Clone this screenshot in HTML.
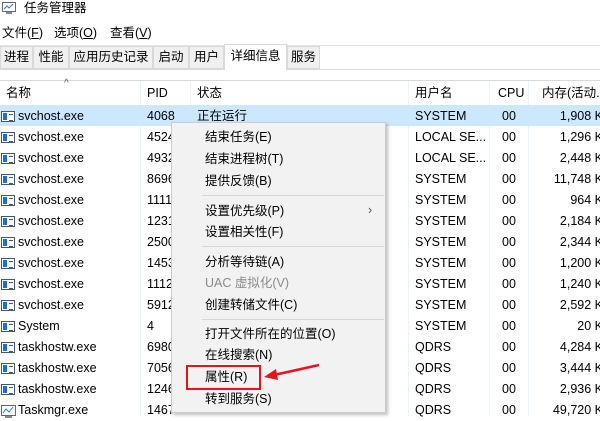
<!DOCTYPE html>
<html><head><meta charset="utf-8"><style>
*{margin:0;padding:0;box-sizing:border-box}
body{width:600px;height:416px;overflow:hidden;background:#fff;font-family:"Liberation Sans","Microsoft YaHei","Noto Sans CJK SC",sans-serif;font-size:12.5px;color:#000;position:relative}
.a{position:absolute;white-space:nowrap;line-height:16px}
.tab{position:absolute;top:46px;height:23px;border:1px solid #d9d9d9;background:#f0f0f0;line-height:21px;text-align:center;white-space:nowrap;font-size:12.5px}
.row{position:absolute;left:0;width:600px;height:21px;line-height:21px;white-space:nowrap}
.row span{position:absolute}
.ic{position:absolute;left:1px;top:5px;width:14px;height:11px;border:1px solid #3c5a7a;background:#fff}
.ic:before{content:"";position:absolute;left:1px;top:1px;width:4px;height:7px;background:#1e6fd0}
.ic:after{content:"";position:absolute;left:7px;top:2px;width:4px;height:5px;border-top:1px solid #555;border-bottom:1px solid #555}
.vl{position:absolute;top:81px;width:1px;height:335px;background:#eaf2fb}
.menu{position:absolute;left:171px;top:122px;width:215px;height:291px;background:#f2f2f2;border:1px solid #ccc;box-shadow:2px 2px 3px rgba(0,0,0,.25)}
.mi{position:absolute;left:33px;font-size:12.5px;line-height:16px;white-space:nowrap}
.sep{position:absolute;left:30px;width:182px;height:1px;background:#d7d7d7}
</style></head><body>
<svg class="a" style="left:2px;top:2px" width="14" height="12"><rect x="0.5" y="0.5" width="13" height="9" fill="#fff" stroke="#667"/><polyline points="2,7 5,4 7,6 11,2" fill="none" stroke="#2a7ad0"/><rect x="4" y="10" width="6" height="2" fill="#889"/></svg>
<div class="a" style="left:24px;top:0px">任务管理器</div>
<div class="a" style="left:2px;top:25px">文件(<u>F</u>)</div>
<div class="a" style="left:54px;top:25px">选项(<u>O</u>)</div>
<div class="a" style="left:110px;top:25px">查看(<u>V</u>)</div>
<div class="a" style="left:0;top:45px;width:600px;height:1px;background:#e3e3e3"></div>
<div class="a" style="left:0;top:69px;width:600px;height:1px;background:#d9d9d9"></div>
<div class="tab" style="left:0;width:33px">进程</div>
<div class="tab" style="left:33px;width:36px">性能</div>
<div class="tab" style="left:69px;width:84px">应用历史记录</div>
<div class="tab" style="left:153px;width:36px">启动</div>
<div class="tab" style="left:189px;width:35px">用户</div>
<div class="tab" style="left:224px;top:44px;height:26px;width:63px;background:#fff;border-bottom:none;line-height:22px">详细信息</div>
<div class="tab" style="left:287px;width:33px">服务</div>
<div class="a" style="left:0;top:80px;width:600px;height:1px;background:#d9d9d9"></div>
<div class="a" style="left:64px;top:76px;font-size:10px;color:#555">^</div>
<div class="a" style="left:6px;top:85px">名称</div>
<div class="a" style="left:147px;top:85px">PID</div>
<div class="a" style="left:197px;top:85px">状态</div>
<div class="a" style="left:415px;top:85px">用户名</div>
<div class="a" style="left:498px;top:85px">CPU</div>
<div class="a" style="left:542px;top:85px">内存(活动..</div>
<div class="vl" style="left:140px"></div><div class="vl" style="left:190px;height:24px"></div><div class="vl" style="left:408px"></div><div class="vl" style="left:489px"></div><div class="vl" style="left:528px"></div>
<div class="a" style="left:0;top:105px;width:600px;height:21px;background:#cce8ff"></div>
<div class="a" style="left:0;top:106px;width:600px">
<div class="row" style="top:0"><i class="ic"></i><span style="left:18px">svchost.exe</span><span style="left:147px">4068</span><span style="left:197px">正在运行</span><span style="left:415px">SYSTEM</span><span style="left:502px">00</span><span style="right:-3px">1,908 K</span></div>
<div class="row" style="top:21px"><i class="ic"></i><span style="left:18px">svchost.exe</span><span style="left:147px">4524</span><span style="left:415px">LOCAL SE...</span><span style="left:502px">00</span><span style="right:-3px">1,296 K</span></div>
<div class="row" style="top:42px"><i class="ic"></i><span style="left:18px">svchost.exe</span><span style="left:147px">4932</span><span style="left:415px">LOCAL SE...</span><span style="left:502px">00</span><span style="right:-3px">2,448 K</span></div>
<div class="row" style="top:63px"><i class="ic"></i><span style="left:18px">svchost.exe</span><span style="left:147px">8696</span><span style="left:415px">SYSTEM</span><span style="left:502px">00</span><span style="right:-3px">11,748 K</span></div>
<div class="row" style="top:84px"><i class="ic"></i><span style="left:18px">svchost.exe</span><span style="left:147px">1111</span><span style="left:415px">SYSTEM</span><span style="left:502px">00</span><span style="right:-3px">964 K</span></div>
<div class="row" style="top:105px"><i class="ic"></i><span style="left:18px">svchost.exe</span><span style="left:147px">1231</span><span style="left:415px">SYSTEM</span><span style="left:502px">00</span><span style="right:-3px">2,184 K</span></div>
<div class="row" style="top:126px"><i class="ic"></i><span style="left:18px">svchost.exe</span><span style="left:147px">2500</span><span style="left:415px">SYSTEM</span><span style="left:502px">00</span><span style="right:-3px">2,344 K</span></div>
<div class="row" style="top:147px"><i class="ic"></i><span style="left:18px">svchost.exe</span><span style="left:147px">1453</span><span style="left:415px">SYSTEM</span><span style="left:502px">00</span><span style="right:-3px">1,200 K</span></div>
<div class="row" style="top:168px"><i class="ic"></i><span style="left:18px">svchost.exe</span><span style="left:147px">1112</span><span style="left:415px">SYSTEM</span><span style="left:502px">00</span><span style="right:-3px">1,240 K</span></div>
<div class="row" style="top:189px"><i class="ic"></i><span style="left:18px">svchost.exe</span><span style="left:147px">5912</span><span style="left:415px">SYSTEM</span><span style="left:502px">00</span><span style="right:-3px">2,592 K</span></div>
<div class="row" style="top:210px"><i class="ic"></i><span style="left:18px">System</span><span style="left:147px">4</span><span style="left:415px">SYSTEM</span><span style="left:502px">00</span><span style="right:-3px">20 K</span></div>
<div class="row" style="top:231px"><i class="ic"></i><span style="left:18px">taskhostw.exe</span><span style="left:147px">6980</span><span style="left:415px">QDRS</span><span style="left:502px">00</span><span style="right:-3px">4,284 K</span></div>
<div class="row" style="top:252px"><i class="ic"></i><span style="left:18px">taskhostw.exe</span><span style="left:147px">7056</span><span style="left:415px">QDRS</span><span style="left:502px">00</span><span style="right:-3px">3,444 K</span></div>
<div class="row" style="top:273px"><i class="ic"></i><span style="left:18px">taskhostw.exe</span><span style="left:147px">1246</span><span style="left:415px">QDRS</span><span style="left:502px">00</span><span style="right:-3px">2,936 K</span></div>
<div class="row" style="top:294px"><svg style="position:absolute;left:1px;top:5px" width="16" height="14"><rect x="0.5" y="0.5" width="14" height="10" fill="#fff" stroke="#667"/><polyline points="2,8 5,4 8,7 12,2" fill="none" stroke="#2a7ad0"/><rect x="4" y="11" width="7" height="2" fill="#889"/></svg><span style="left:18px">Taskmgr.exe</span><span style="left:147px">1467</span><span style="left:415px">QDRS</span><span style="left:502px">00</span><span style="right:-3px">49,720 K</span></div>
</div>
<div class="menu">
<div class="mi" style="top:6px">结束任务(E)</div>
<div class="mi" style="top:28px">结束进程树(T)</div>
<div class="mi" style="top:50px">提供反馈(B)</div>
<div class="sep" style="top:72px"></div>
<div class="mi" style="top:80px">设置优先级(P)</div>
<div class="a" style="left:196px;top:79px;color:#555">›</div>
<div class="mi" style="top:101px">设置相关性(F)</div>
<div class="sep" style="top:123px"></div>
<div class="mi" style="top:131px">分析等待链(A)</div>
<div class="mi" style="top:152px;color:#8a8a8a">UAC 虚拟化(V)</div>
<div class="mi" style="top:174px">创建转储文件(C)</div>
<div class="sep" style="top:196px"></div>
<div class="mi" style="top:203px">打开文件所在的位置(O)</div>
<div class="mi" style="top:224px">在线搜索(N)</div>
<div class="mi" style="top:246px">属性(R)</div>
<div class="mi" style="top:268px">转到服务(S)</div>
<div class="a" style="left:14px;top:242px;width:75px;height:25px;border:2px solid #e8141c"></div>
</div>
<svg class="a" style="left:262px;top:360px" width="60" height="22"><line x1="57" y1="5" x2="12" y2="15" stroke="#e8141c" stroke-width="2.5"/><polygon points="2,17 14,9 16,20" fill="#e8141c"/></svg>
</body></html>
